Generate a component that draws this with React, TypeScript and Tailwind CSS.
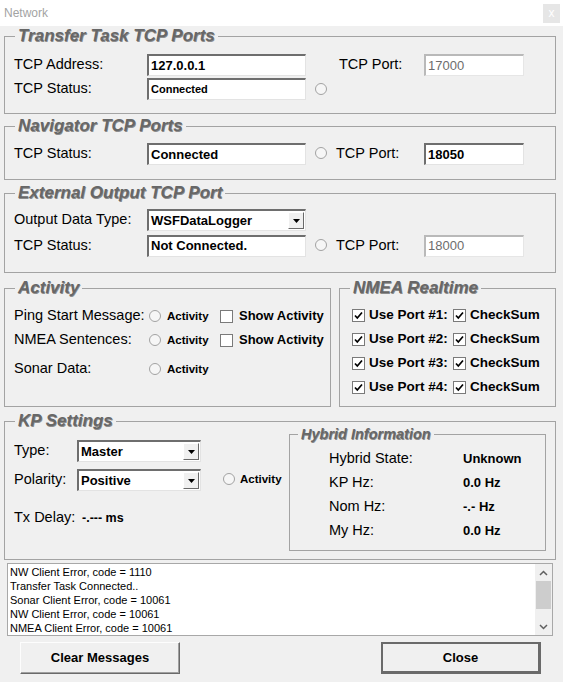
import React from "react";
import clsx from "clsx";

// sunken edit box
function Edit({
  w,
  children,
  size = "big",
  disabled = false,
}: {
  w: string;
  children: React.ReactNode;
  size?: "big" | "small";
  disabled?: boolean;
}) {
  return (
    <div
      className={clsx(
        "h-[22px] bg-white flex items-center pl-[2px] shrink-0 whitespace-nowrap border-t-2 border-l-2 border-b border-r",
        disabled
          ? "border-t-[#b9b9b9] border-l-[#b9b9b9] border-b-[#e6e6e6] border-r-[#e6e6e6] text-[#6d6d6d] text-[13px]"
          : "border-t-[#6e6e6e] border-l-[#6e6e6e] border-b-[#e3e3e3] border-r-[#e3e3e3] font-bold text-black",
        !disabled && size === "big" && "text-[13px]",
        !disabled && size === "small" && "text-[11px]",
        w
      )}
    >
      {children}
    </div>
  );
}

function Combo({ w, value }: { w: string; value: string }) {
  return (
    <div
      className={clsx(
        "h-[22px] bg-white flex items-center justify-between pl-[2px] pr-[1px] shrink-0 border-t-2 border-l-2 border-b border-r border-t-[#6e6e6e] border-l-[#6e6e6e] border-b-[#e3e3e3] border-r-[#e3e3e3] text-[13px] font-bold",
        w
      )}
    >
      <span>{value}</span>
      <span className="w-[16px] h-[17px] bg-[#f0f0f0] border border-t-white border-l-white border-b-[#696969] border-r-[#696969] flex items-center justify-center">
        <svg width="7" height="4" viewBox="0 0 7 4">
          <polygon points="0,0 7,0 3.5,4" fill="#000" />
        </svg>
      </span>
    </div>
  );
}

function Radio() {
  return (
    <span className="inline-block w-[12px] h-[12px] rounded-full border border-[#a2a2a2] bg-[#f6f6f6] shrink-0" />
  );
}

function Check({ on }: { on: boolean }) {
  return (
    <span className="inline-flex items-center justify-center w-[13px] h-[13px] bg-white border border-[#7a7a7a] shrink-0">
      {on && (
        <svg width="9" height="9" viewBox="0 0 9 9">
          <path d="M1 4.5 L3.3 7 L8 1.5" fill="none" stroke="#000" strokeWidth="1.7" />
        </svg>
      )}
    </span>
  );
}

function Group({
  title,
  className,
  small = false,
  children,
}: {
  title: string;
  className?: string;
  small?: boolean;
  children: React.ReactNode;
}) {
  return (
    <fieldset className={clsx("border border-[#a3a3a3] m-0 p-0 min-w-0 shrink-0", className)}>
      <legend
        className={clsx(
          "font-bold italic text-[#676767] [text-shadow:0.6px_0.6px_0_#8c8c8c] whitespace-nowrap",
          small
            ? "ml-[8px] px-[3px] text-[14.5px] leading-[18px]"
            : "ml-[10px] px-[3px] text-[17px] leading-[20px]"
        )}
      >
        {title}
      </legend>
      {children}
    </fieldset>
  );
}

const label = "text-[14.5px] text-black shrink-0 whitespace-nowrap";

export default function App() {
  const messages = [
    "NW Client Error, code = 1110",
    "Transfer Task Connected..",
    "Sonar Client Error, code = 10061",
    "NW Client Error, code = 10061",
    "NMEA Client Error, code = 10061",
  ];

  return (
    <div className="w-[563px] h-[682px] bg-[#f0f0f0] font-['Liberation_Sans',Arial,sans-serif] overflow-hidden flex flex-col">
      {/* title bar */}
      <div className="h-[26px] bg-white flex items-center justify-between pl-[4px] pr-[3px] shrink-0">
        <span className="text-[12px] text-[#a3a3a3]">Network</span>
        <span className="w-[17px] h-[19px] bg-[#e6e6e6] text-white text-[12px] flex items-center justify-center">
          x
        </span>
      </div>

      <div className="pl-[4px] flex flex-col">
        {/* Transfer Task */}
        <Group title="Transfer Task TCP Ports" className="w-[552px] h-[88px]">
          <div className="pl-[9px] pt-[8px] flex flex-col gap-[2px]">
            <div className="flex items-center h-[22px]">
              <span className={clsx(label, "w-[133px]")}>TCP Address:</span>
              <Edit w="w-[159px]">127.0.0.1</Edit>
              <span className={clsx(label, "w-[85px] ml-[33px]")}>TCP Port:</span>
              <Edit w="w-[100px]" disabled>
                17000
              </Edit>
            </div>
            <div className="flex items-center h-[22px]">
              <span className={clsx(label, "w-[133px]")}>TCP Status:</span>
              <Edit w="w-[159px]" size="small">
                Connected
              </Edit>
              <span className="ml-[9px] mt-[2px]">
                <Radio />
              </span>
            </div>
          </div>
        </Group>

        {/* Navigator */}
        <Group title="Navigator TCP Ports" className="w-[552px] h-[64px] mt-[2px]">
          <div className="pl-[9px] pt-[7px] flex items-center h-[29px]">
            <span className={clsx(label, "w-[133px]")}>TCP Status:</span>
            <Edit w="w-[159px]">Connected</Edit>
            <span className="ml-[9px]">
              <Radio />
            </span>
            <span className={clsx(label, "w-[88px] ml-[9px]")}>TCP Port:</span>
            <Edit w="w-[100px]">18050</Edit>
          </div>
        </Group>

        {/* External Output */}
        <Group title="External Output TCP Port" className="w-[552px] h-[90px] mt-[3px]">
          <div className="pl-[9px] pt-[6px] flex flex-col gap-[3px]">
            <div className="flex items-center h-[22px]">
              <span className={clsx(label, "w-[133px]")}>Output Data Type:</span>
              <Combo w="w-[159px]" value="WSFDataLogger" />
            </div>
            <div className="flex items-center h-[23px]">
              <span className={clsx(label, "w-[133px]")}>TCP Status:</span>
              <Edit w="w-[159px]">Not Connected.</Edit>
              <span className="ml-[9px]">
                <Radio />
              </span>
              <span className={clsx(label, "w-[88px] ml-[9px]")}>TCP Port:</span>
              <Edit w="w-[100px]" disabled>
                18000
              </Edit>
            </div>
          </div>
        </Group>

        {/* Activity + NMEA */}
        <div className="flex gap-[8px] mt-[5px]">
          <Group title="Activity" className="w-[327px] h-[129px]">
            <div className="pl-[9px] pt-[6px] flex flex-col">
              <div className="flex items-center h-[24px]">
                <span className={clsx(label, "w-[135px]")}>Ping Start Message:</span>
                <Radio />
                <span className="w-[59px] pl-[6px] text-[11.5px] font-bold mt-[2px]">Activity</span>
                <Check on={false} />
                <span className="ml-[6px] text-[13px] font-bold">Show Activity</span>
              </div>
              <div className="flex items-center h-[24px]">
                <span className={clsx(label, "w-[135px]")}>NMEA Sentences:</span>
                <Radio />
                <span className="w-[59px] pl-[6px] text-[11.5px] font-bold mt-[2px]">Activity</span>
                <Check on={false} />
                <span className="ml-[6px] text-[13px] font-bold">Show Activity</span>
              </div>
              <div className="flex items-center h-[24px] mt-[5px]">
                <span className={clsx(label, "w-[135px]")}>Sonar Data:</span>
                <Radio />
                <span className="w-[59px] pl-[6px] text-[11.5px] font-bold mt-[2px]">Activity</span>
              </div>
            </div>
          </Group>

          <Group title="NMEA Realtime" className="w-[217px] h-[129px]">
            <div className="pl-[12px] pt-[5px] flex flex-col">
              {[1, 2, 3, 4].map((n) => (
                <div key={n} className="flex items-center h-[24px]">
                  <Check on />
                  <span className="ml-[4px] w-[84px] text-[13.5px] font-bold">Use Port #{n}:</span>
                  <Check on />
                  <span className="ml-[4px] text-[13.5px] font-bold">CheckSum</span>
                </div>
              ))}
            </div>
          </Group>
        </div>

        {/* KP Settings */}
        <Group title="KP Settings" className="w-[552px] h-[149px] mt-[4px]">
          <div className="flex">
            <div className="w-[284px] pl-[9px] pt-[9px] flex flex-col shrink-0">
              <div className="flex items-center h-[22px]">
                <span className={clsx(label, "w-[63px]")}>Type:</span>
                <Combo w="w-[124px]" value="Master" />
              </div>
              <div className="flex items-center h-[22px] mt-[7px]">
                <span className={clsx(label, "w-[63px]")}>Polarity:</span>
                <Combo w="w-[124px]" value="Positive" />
                <span className="ml-[22px]">
                  <Radio />
                </span>
                <span className="ml-[5px] text-[11.5px] font-bold">Activity</span>
              </div>
              <div className="flex items-center h-[22px] mt-[16px]">
                <span className={clsx(label, "w-[68px]")}>Tx Delay:</span>
                <span className="text-[12.5px] font-bold">-.--- ms</span>
              </div>
            </div>
            <Group title="Hybrid Information" small className="w-[257px] h-[126px] -mt-[6px]">
              <div className="pl-[39px] pt-[4px] flex flex-col">
                {[
                  ["Hybrid State:", "Unknown"],
                  ["KP Hz:", "0.0 Hz"],
                  ["Nom Hz:", "-.- Hz"],
                  ["My Hz:", "0.0 Hz"],
                ].map(([k, v]) => (
                  <div key={k} className="flex items-center h-[24px]">
                    <span className={clsx(label, "w-[134px]")}>{k}</span>
                    <span className="text-[13px] font-bold">{v}</span>
                  </div>
                ))}
              </div>
            </Group>
          </div>
        </Group>
      </div>

      {/* message list */}
      <div className="ml-[7px] mt-[3px] w-[546px] h-[73px] bg-white border border-[#a8a8a8] flex shrink-0">
        <div className="flex-1 pl-[2px] pt-[1px] text-[11px] leading-[14px] text-black overflow-hidden">
          {messages.map((m) => (
            <div key={m}>{m}</div>
          ))}
        </div>
        <div className="w-[17px] bg-[#f0f0f0] flex flex-col items-center">
          <div className="h-[17px] flex items-center justify-center">
            <svg width="9" height="6" viewBox="0 0 9 6">
              <path d="M1 5 L4.5 1.5 L8 5" fill="none" stroke="#606060" strokeWidth="1.5" />
            </svg>
          </div>
          <div className="w-[15px] h-[28px] bg-[#cdcdcd]" />
          <div className="flex-1" />
          <div className="h-[17px] flex items-center justify-center">
            <svg width="9" height="6" viewBox="0 0 9 6">
              <path d="M1 1 L4.5 4.5 L8 1" fill="none" stroke="#606060" strokeWidth="1.5" />
            </svg>
          </div>
        </div>
      </div>

      {/* buttons */}
      <div className="flex justify-between pl-[20px] pr-[22px] mt-[6px]">
        <button className="w-[160px] h-[32px] bg-[#f0f0f0] border border-t-[#fdfdfd] border-l-[#fdfdfd] border-b-[#6a6a6a] border-r-[#6a6a6a] shadow-[inset_-1px_-1px_0_#a0a0a0] text-[13px] font-bold text-black">
          Clear Messages
        </button>
        <button className="w-[160px] h-[32px] bg-[#f0f0f0] border-2 border-[#6a6a6a] border-b-[3px] border-r-[3px] text-[13px] font-bold text-black">
          Close
        </button>
      </div>
    </div>
  );
}
